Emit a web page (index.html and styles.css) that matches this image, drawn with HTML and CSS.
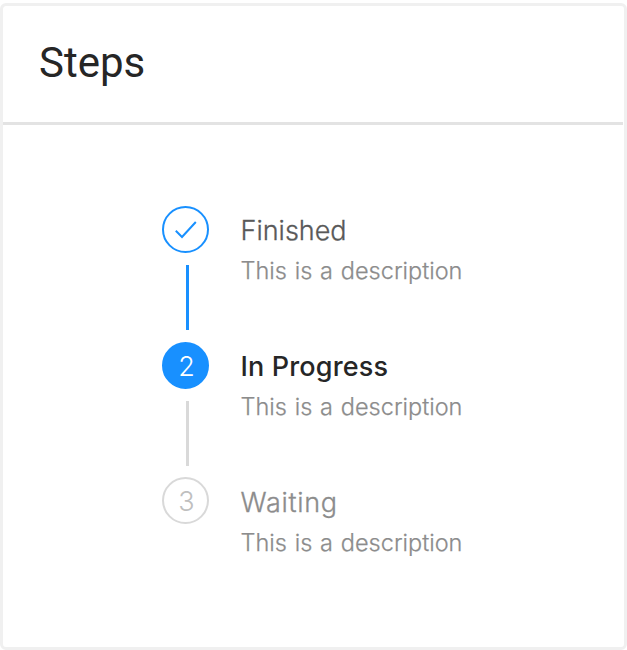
FILE: index.html
```html
<!DOCTYPE html>
<html lang="en">
<head>
<meta charset="utf-8">
<title>Steps</title>
<link rel="stylesheet" href="styles.css">
</head>
<body>
<main class="card">
  <header class="card-header"><h1 class="title">Steps</h1></header>
  <ol class="steps">
    <li class="step finished">
      <div class="rail">
        <span class="dot"><svg class="check" viewBox="0 0 24 20"><path d="M1.8 10.8 8 17 21.8 2"/></svg></span>
        <span class="line"></span>
      </div>
      <div class="text"><h2 class="name">Finished</h2><p class="desc">This is a description</p></div>
    </li>
    <li class="step active">
      <div class="rail"><span class="dot">2</span><span class="line"></span></div>
      <div class="text"><h2 class="name">In Progress</h2><p class="desc">This is a description</p></div>
    </li>
    <li class="step waiting">
      <div class="rail"><span class="dot">3</span></div>
      <div class="text"><h2 class="name">Waiting</h2><p class="desc">This is a description</p></div>
    </li>
  </ol>
</main>
</body>
</html>
```
FILE: styles.css
```css
* { box-sizing: border-box; }
body { margin: 0; padding-top: 3px; background: #fff; overflow: hidden; }
.card {
  height: 647px;
  border: 3px solid #f0f0f0;
  border-radius: 6px;
  font-family: Inter, "Liberation Sans", sans-serif;
}
.card-header {
  height: 119px;
  margin-right: 1px;
  padding: 32px 0 0 36px;
  border-bottom: 3px solid #e3e3e3;
}
.title {
  margin: 0;
  font: 400 42px/49px Roboto, sans-serif;
  color: #262626;
}
.steps { list-style: none; margin: 0; padding: 81px 0 0 159px; }
.step { display: flex; gap: 31.5px; height: 135.7px; }
.rail { width: 47px; display: flex; flex-direction: column; align-items: center; }
.dot {
  flex: none;
  display: flex;
  align-items: center;
  justify-content: center;
  width: 47px;
  height: 47px;
  padding: 2px 0 0 2px;
  border: 2px solid #1890ff;
  border-radius: 50%;
  font-size: 27px;
  font-weight: 300;
  line-height: 1;
}
.finished .dot { padding: 0; }
.check { width: 24px; height: 20px; fill: none; stroke: #1890ff; stroke-width: 2; }
.line { width: 3px; height: 65px; margin: 12px 0 0 3px; background: #d9d9d9; }
.finished .line { background: #1890ff; }
.active .dot { background: #1890ff; color: #fff; }
.waiting .dot { border-color: #d9d9d9; color: #bfbfbf; }
.name {
  margin: 7px 0 0;
  font-size: 27px;
  font-weight: 300;
  line-height: 36px;
  color: #595959;
  -webkit-text-stroke: 0.3px currentColor;
}
.desc {
  margin: 6px 0 0;
  font-size: 23.5px;
  font-weight: 300;
  line-height: 32px;
  color: #8c8c8c;
  white-space: nowrap;
  word-spacing: 1.2px;
  -webkit-text-stroke: 0.25px currentColor;
}
.active .name { color: #262626; font-weight: 500; letter-spacing: 0.15px; -webkit-text-stroke: 0; }
.waiting .name { margin-top: 8px; color: #8c8c8c; letter-spacing: 0.7px; }
```
